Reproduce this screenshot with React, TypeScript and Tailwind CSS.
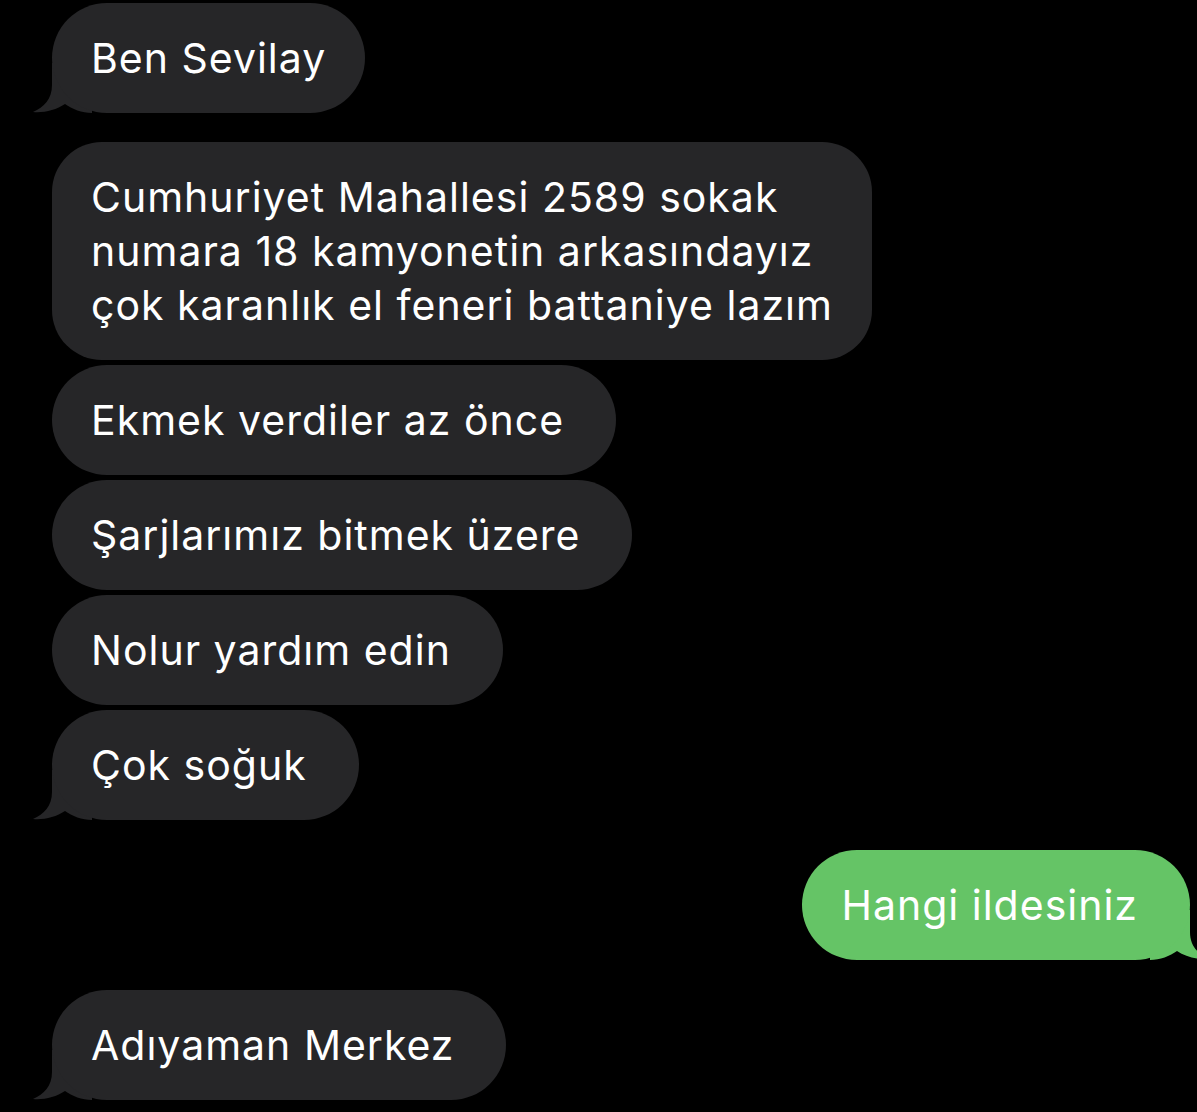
import React from 'react'

const font = { fontFamily: 'Inter, "Noto Sans", sans-serif' }

function TailLeft() {
  return (
    <svg
      className="absolute bottom-0 left-[-20px] h-[50px] w-[60px]"
      viewBox="0 0 60 50"
      aria-hidden
    >
      <path
        d="M20 0 L20 22 C20 36 12 44 1 49 C12 50 24 47 33 41 C40 46 50 50 60 50 L60 0 Z"
        fill="#262628"
      />
    </svg>
  )
}

function TailRight() {
  return (
    <svg
      className="absolute bottom-0 right-[-20px] h-[50px] w-[60px]"
      viewBox="0 0 60 50"
      aria-hidden
    >
      <path
        d="M40 0 L40 22 C40 36 48 44 59 49 C48 50 36 47 27 41 C20 46 10 50 0 50 L0 0 Z"
        fill="#65c466"
      />
    </svg>
  )
}

function Incoming({ lines, tail, wide }: { lines: string[]; tail?: boolean; wide?: boolean }) {
  return (
    <div className="relative self-start">
      <div
        className={`relative z-10 bg-[#262628] py-[28px] pl-[39px] text-[41px] leading-[54px] tracking-[1px] text-white ${
          wide ? 'pr-[52px]' : 'pr-[39px]'
        } ${lines.length > 1 ? 'rounded-[50px]' : 'rounded-[56px]'}`}
      >
        {lines.map((l, i) => (
          <div key={i} className="whitespace-nowrap">
            {l}
          </div>
        ))}
      </div>
      {tail && <TailLeft />}
    </div>
  )
}

export default function App() {
  return (
    <div
      className="min-h-[1112px] w-[1197px] overflow-hidden bg-black pl-[52px] pr-[7px] pt-[3px]"
      style={font}
    >
      <div className="flex flex-col">
        <Incoming lines={['Ben Sevilay']} tail />

        <div className="mt-[29px] flex flex-col gap-[5px]">
          <Incoming
            lines={[
              'Cumhuriyet Mahallesi 2589 sokak',
              'numara 18 kamyonetin arkasındayız',
              'çok karanlık el feneri battaniye lazım',
            ]}
          />
          <Incoming lines={['Ekmek verdiler az önce']} wide />
          <Incoming lines={['Şarjlarımız bitmek üzere']} wide />
          <Incoming lines={['Nolur yardım edin']} wide />
          <Incoming lines={['Çok soğuk']} tail wide />
        </div>

        <div className="relative mt-[30px] self-end">
          <div className="relative z-10 rounded-[56px] bg-[#65c466] py-[28px] pl-[39px] pr-[52px] text-[41px] leading-[54px] tracking-[1px] text-white">
            Hangi ildesiniz
          </div>
          <TailRight />
        </div>

        <div className="mt-[30px] flex flex-col">
          <Incoming lines={['Adıyaman Merkez']} tail wide />
        </div>
      </div>
    </div>
  )
}
